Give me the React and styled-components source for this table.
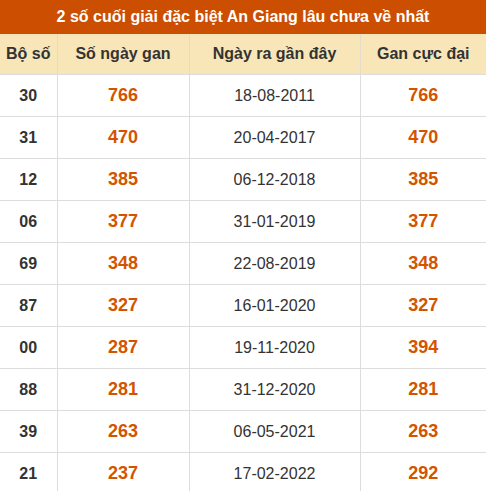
import React from "react";
import styled, { createGlobalStyle } from "styled-components";

const GlobalStyle = createGlobalStyle`
  html, body {
    margin: 0;
    padding: 0;
    background: #ffffff;
    font-family: "Liberation Sans", Arial, sans-serif;
  }
`;

const Wrapper = styled.div`
  width: 486px;
`;

const Table = styled.table`
  width: 100%;
  border-collapse: collapse;
  table-layout: fixed;
  color: #333333;
`;

const Title = styled.th`
  background: #cc4e00;
  color: #ffffff;
  font-size: 16px;
  font-weight: 700;
  height: 34px;
  padding: 0;
  text-align: center;
`;

const HeadCell = styled.th`
  background: #f8e6b9;
  height: 40px;
  padding: 0;
  font-size: 16px;
  font-weight: 700;
  color: #333333;
  border-left: 1px solid #e2dccb;
  border-bottom: 1px solid #dddddd;
  text-align: center;

  &:first-child {
    border-left: none;
  }
`;

const Cell = styled.td`
  height: 41px;
  padding: 0;
  text-align: center;
  border-left: 1px solid #dddddd;
  border-bottom: 1px solid #dddddd;
  font-size: ${(p) => (p.$hot ? "18px" : "16px")};
  font-weight: ${(p) => (p.$bold || p.$hot ? 700 : 400)};
  color: ${(p) => (p.$hot ? "#d35400" : "#333333")};

  &:first-child {
    border-left: none;
  }
`;

const rows = [
  ["30", "766", "18-08-2011", "766"],
  ["31", "470", "20-04-2017", "470"],
  ["12", "385", "06-12-2018", "385"],
  ["06", "377", "31-01-2019", "377"],
  ["69", "348", "22-08-2019", "348"],
  ["87", "327", "16-01-2020", "327"],
  ["00", "287", "19-11-2020", "394"],
  ["88", "281", "31-12-2020", "281"],
  ["39", "263", "06-05-2021", "263"],
  ["21", "237", "17-02-2022", "292"],
];

export default function App() {
  return (
    <Wrapper>
      <GlobalStyle />
      <Table>
        <colgroup>
          <col style={{ width: 57 }} />
          <col style={{ width: 132 }} />
          <col style={{ width: 171 }} />
          <col style={{ width: 126 }} />
        </colgroup>
        <thead>
          <tr>
            <Title colSpan={4}>2 số cuối giải đặc biệt An Giang lâu chưa về nhất</Title>
          </tr>
          <tr>
            <HeadCell>Bộ số</HeadCell>
            <HeadCell>Số ngày gan</HeadCell>
            <HeadCell>Ngày ra gần đây</HeadCell>
            <HeadCell>Gan cực đại</HeadCell>
          </tr>
        </thead>
        <tbody>
          {rows.map((r) => (
            <tr key={r[0]}>
              <Cell $bold>{r[0]}</Cell>
              <Cell $hot>{r[1]}</Cell>
              <Cell>{r[2]}</Cell>
              <Cell $hot>{r[3]}</Cell>
            </tr>
          ))}
        </tbody>
      </Table>
    </Wrapper>
  );
}
